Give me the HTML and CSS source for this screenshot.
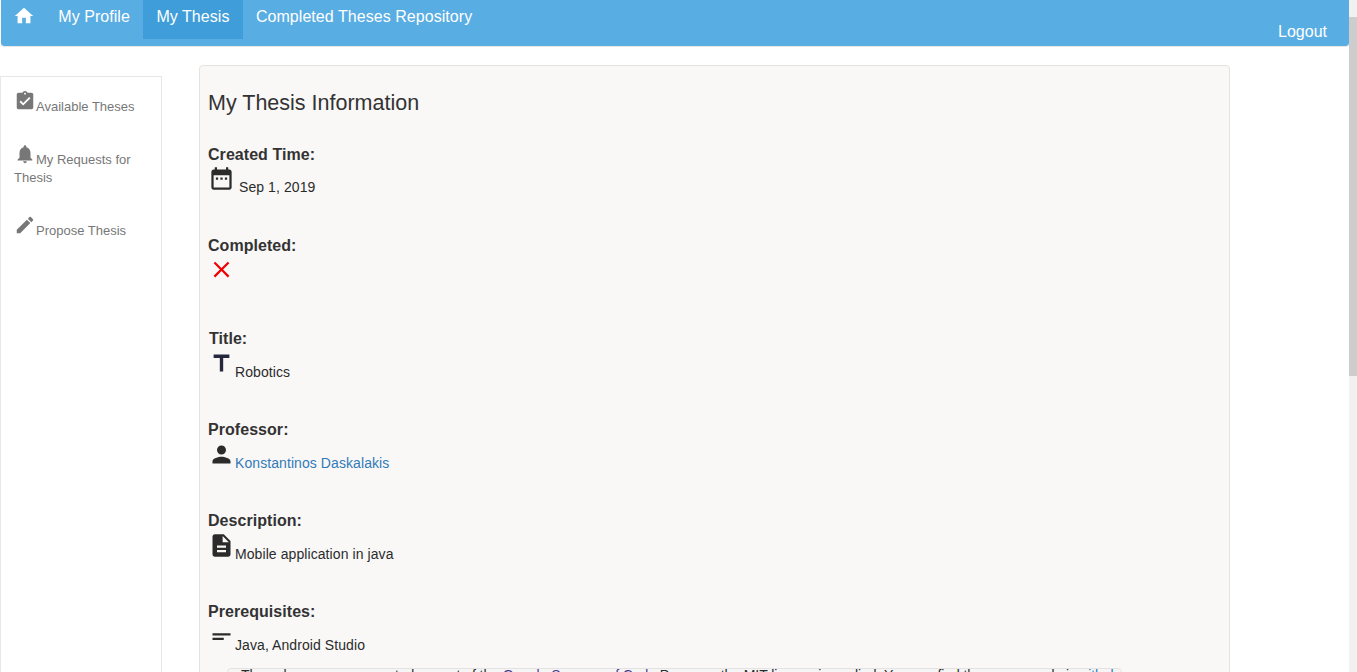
FILE: index.html
```html
<!DOCTYPE html>
<html lang="en">
<head>
<meta charset="utf-8">
<title>My Thesis</title>
<link rel="stylesheet" href="styles.css">
</head>
<body>
<div class="page">
  <div class="content">
    <nav class="navbar">
      <a class="nav-home" href="#"><svg class="icon-home" viewBox="0 0 24 24"><path d="M10 20v-6h4v6h5v-8h3L12 3 2 12h3v8z"/></svg></a>
      <a class="nav-link" href="#">My Profile</a>
      <a class="nav-link active" href="#">My Thesis</a>
      <a class="nav-link" href="#">Completed Theses Repository</a>
      <a class="nav-logout" href="#">Logout</a>
    </nav>
    <div class="columns">
      <aside class="sidebar">
        <a class="side-item" href="#"><svg class="icon-side" viewBox="0 0 24 24"><path d="M19 3h-4.18C14.4 1.84 13.3 1 12 1c-1.3 0-2.4.84-2.82 2H5c-1.1 0-2 .9-2 2v14c0 1.1.9 2 2 2h14c1.1 0 2-.9 2-2V5c0-1.1-.9-2-2-2zm-7 0c.55 0 1 .45 1 1s-.45 1-1 1-1-.45-1-1 .45-1 1-1zm-2 14l-4-4 1.41-1.41L10 14.17l6.59-6.59L18 9l-8 8z"/></svg>Available Theses</a>
        <a class="side-item" href="#"><svg class="icon-side" viewBox="0 0 24 24"><path d="M12 22c1.1 0 2-.9 2-2h-4c0 1.1.89 2 2 2zm6-6v-5c0-3.07-1.64-5.64-4.5-6.32V4c0-.83-.67-1.5-1.5-1.5s-1.5.67-1.5 1.5v.68C7.63 5.36 6 7.92 6 11v5l-2 2v1h16v-1l-2-2z"/></svg>My Requests for Thesis</a>
        <a class="side-item" href="#"><svg class="icon-side" viewBox="0 0 24 24"><path d="M3 17.25V21h3.75L17.81 9.94l-3.75-3.75L3 17.25zM20.71 7.04c.39-.39.39-1.02 0-1.41l-2.34-2.34c-.39-.39-1.02-.39-1.41 0l-1.83 1.83 3.75 3.75 1.83-1.83z"/></svg>Propose Thesis</a>
      </aside>
      <main class="panel">
        <h2 class="panel-title">My Thesis Information</h2>
        <section class="field field-tight">
          <h3 class="field-label">Created Time:</h3>
          <p class="field-value"><svg class="icon-main" viewBox="0 0 24 24"><path d="M9 11H7v2h2v-2zm4 0h-2v2h2v-2zm4 0h-2v2h2v-2zm2-7h-1V2h-2v2H8V2H6v2H5c-1.11 0-1.99.9-1.99 2L3 20c0 1.1.89 2 2 2h14c1.1 0 2-.9 2-2V6c0-1.1-.9-2-2-2zm0 16H5V9h14v11z"/></svg> Sep 1, 2019</p>
        </section>
        <section class="field field-tight field-completed">
          <h3 class="field-label">Completed:</h3>
          <p class="field-value"><svg class="icon-main icon-no" viewBox="0 0 24 24"><path d="M19 6.41L17.59 5 12 10.59 6.41 5 5 6.41 10.59 12 5 17.59 6.41 19 12 13.41 17.59 19 19 17.59 13.41 12z"/></svg></p>
        </section>
        <section class="field">
          <h3 class="field-label field-label-shift">Title:</h3>
          <p class="field-value"><svg class="icon-main icon-navy" viewBox="0 0 24 24"><path d="M5 4v3h5.5v12h3V7H19V4z"/></svg>Robotics</p>
        </section>
        <section class="field">
          <h3 class="field-label">Professor:</h3>
          <p class="field-value"><svg class="icon-main" viewBox="0 0 24 24"><path d="M12 12c2.21 0 4-1.79 4-4s-1.79-4-4-4-4 1.79-4 4 1.79 4 4 4zm0 2c-2.67 0-8 1.34-8 4v2h16v-2c0-2.66-5.33-4-8-4z"/></svg><a class="link" href="#">Konstantinos Daskalakis</a></p>
        </section>
        <section class="field">
          <h3 class="field-label">Description:</h3>
          <p class="field-value"><svg class="icon-main" viewBox="0 0 24 24"><path d="M14 2H6c-1.1 0-1.99.9-1.99 2L4 20c0 1.1.89 2 2 2h12c1.1 0 2-.9 2-2V8l-6-6zm2 16H8v-2h8v2zm0-4H8v-2h8v2zm-3-5V3.5L18.5 9H13z"/></svg>Mobile application in java</p>
        </section>
        <section class="field field-last">
          <h3 class="field-label">Prerequisites:</h3>
          <p class="field-value"><svg class="icon-main" viewBox="0 0 24 24"><path d="M4 9h16v2H4zm0 4h10v2H4z"/></svg>Java, Android Studio</p>
        </section>
        <div class="notice">These lessons were created as part of the <a class="link-visited" href="#">Google Summer of Code</a> Program, the MIT license is applied. You can find the source code in <a class="link" href="#">github</a></div>
      </main>
    </div>
  </div>
  <div class="scrollbar"><div class="scroll-arrow"></div><div class="scroll-thumb"></div></div>
</div>
</body>
</html>
```
FILE: styles.css
```css
* { box-sizing: border-box; }
html, body { margin: 0; height: 672px; overflow: hidden; background: #fff; }
body { font-family: "Liberation Sans", Arial, sans-serif; font-size: 14px; line-height: 20px; color: #333; }
a { text-decoration: none; }
svg { fill: currentColor; }

.page { display: flex; height: 672px; overflow: hidden; }
.content { flex: 1; min-width: 0; }

.navbar { display: flex; align-items: flex-start; height: 47px; margin: 0 0 0 1px; padding-left: 12px; background: #58ade3; border-bottom: 1px solid #e7e7e7; border-radius: 0 0 4px 4px; font-size: 16px; }
.nav-home { display: block; height: 39px; padding-top: 5px; margin-right: 10px; color: #fff; }
.icon-home { display: block; width: 22px; height: 22px; }
.nav-link { display: block; height: 39px; padding: 8px 13.25px 0; line-height: 18px; letter-spacing: 0.05px; color: #fff; }
.nav-link.active { background: #3f9ed9; }
.nav-logout { margin-left: auto; margin-right: 22px; padding-top: 23px; line-height: 18px; color: #fff; }

.columns { display: flex; align-items: flex-start; }
.sidebar { flex: none; width: 162px; height: 640px; margin-top: 29px; padding: 13px 13px 0; background: #fff; border: 1px solid #e7e7e7; font-size: 13px; line-height: 18px; }
.side-item { display: block; margin-bottom: 27px; color: #777; }
.icon-side { width: 22px; height: 22px; vertical-align: -1px; }

.panel { flex: none; width: 1031px; height: 640px; margin: 18px 0 0 37px; padding: 0 8px; overflow: hidden; background: #f9f8f7; border: 1px solid #e3e3e3; border-radius: 4px; }
.panel-title { margin: 24px 0 27px; font-size: 21.5px; line-height: 27px; font-weight: 400; }
.field { height: 91px; }
.field-completed { height: 93px; }
.field-last { height: 67px; }
.field-label { margin: 0; font-size: 16px; line-height: 22px; font-weight: 700; letter-spacing: 0.05px; }
.field-tight .field-label { margin-bottom: -1px; }
.field-label-shift { margin-left: 1px; }
.field-value { margin: 0; letter-spacing: 0.08px; color: #2b2b2b; }
.icon-main { width: 27px; height: 27px; }
.icon-no { color: #f00000; }
.icon-navy { color: #25283d; }
.link { color: #337ab7; }
.link-visited { color: #4c3a8f; }
.notice { margin-left: 19px; width: 895px; height: 40px; padding: 0 13px; background: #f5f5f5; border: 1px solid #e3e3e3; border-radius: 4px; color: #2b2b2b; line-height: 12px; letter-spacing: -0.07px; white-space: nowrap; overflow: hidden; }

.scrollbar { flex: none; width: 8px; background: #f1f1f1; }
.scroll-arrow { height: 17px; }
.scroll-thumb { height: 359px; background: #cdcdcd; }
```
